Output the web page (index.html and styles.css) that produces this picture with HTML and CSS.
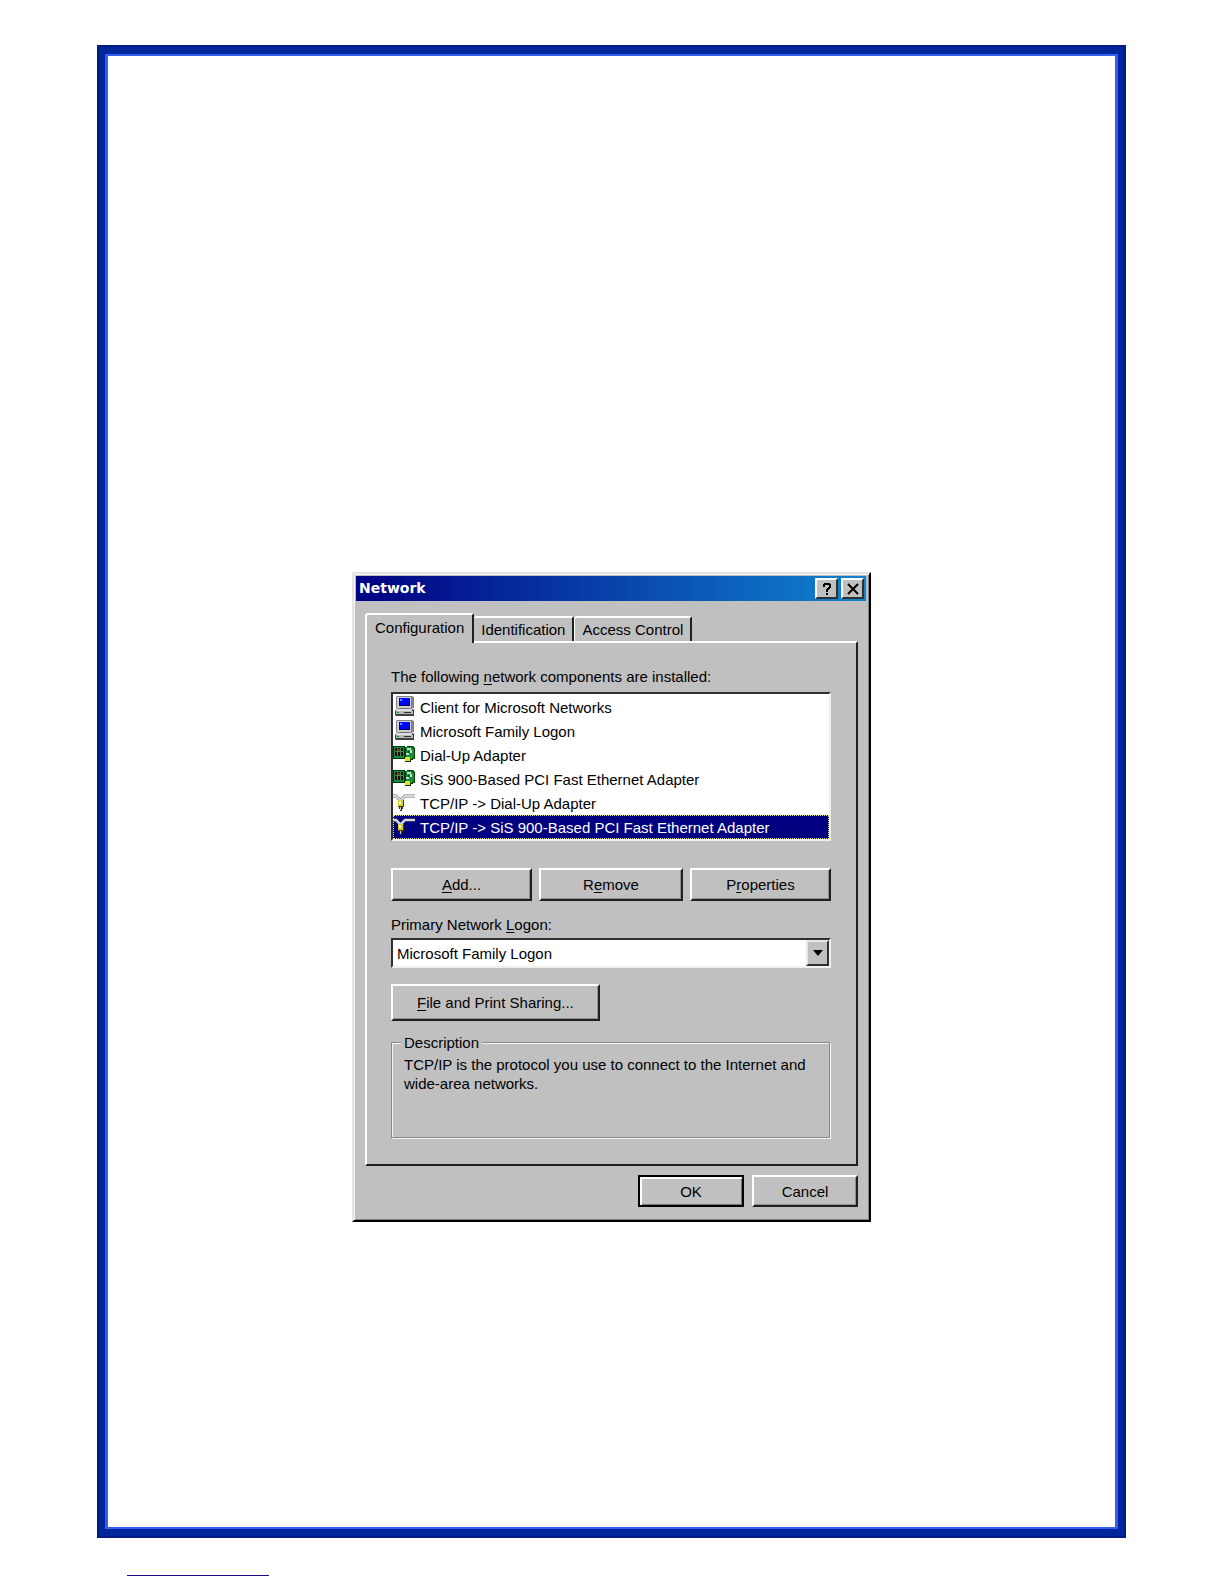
FILE: index.html
```html
<!DOCTYPE html>
<html lang="en">
<head>
  <meta charset="UTF-8">
  <meta name="viewport" content="width=device-width, initial-scale=1.0">
  <title>Network</title>
  <link rel="stylesheet" href="styles.css">
</head>
<body>
  <!-- shared list icons -->
  <svg class="sprites" aria-hidden="true">
    <symbol id="icon-client" viewBox="0 0 22 22">
      <path fill="#808080" d="M4 0h15l2 1v11h-2v1H5l-2-1V1z"/>
      <path fill="#d0d0d0" d="M4 1h14v11H4z"/>
      <path fill="#000060" d="M6 2h11v8H6z"/>
      <path fill="#0000ff" d="M7 2h9v7H7z"/>
      <path fill="#40a0ff" d="M7 3h2v2H7z"/>
      <path fill="#707070" d="M7 12h9v1H7z"/>
      <path fill="#404040" d="M4 13h16l1 1v6H3l-1-1v-4z"/>
      <path fill="#e0e0e0" d="M4 13h15v2H3z"/>
      <path fill="#b8b8b8" d="M3 15h17v3H3z"/>
      <path fill="#303030" d="M11 16h7v1h-7z"/>
      <path fill="#00a000" d="M4 16h2v1H4z"/>
    </symbol>
    <symbol id="icon-adapter" viewBox="0 0 22 22">
      <path fill="#003800" d="M0 2h12v1h2V2h6l2 2v11h-2v1h-2v2h-6v-3H0z"/>
      <path fill="#149038" d="M1 3h10v11H1zM13 3h6l2 2v9h-2v1h-6z"/>
      <path fill="#101010" d="M2 4h8v8H2z"/>
      <path fill="#3c8c4c" d="M4 4h1v8H4zM7 4h1v8H7zM2 7h8v1H2z"/>
      <path fill="#a02020" d="M5 5h2v2H5z"/>
      <path fill="#b8e0c0" d="M14 4h4v2h-4zM17 6h2v3h-2zM13 9h3v2h-3z"/>
      <path fill="#004010" d="M11 4h1v8h-1zM15 7h1v2h-1z"/>
      <path fill="#e8e020" d="M12 13h5v4h-5z"/>
    </symbol>
    <symbol id="icon-protocol" viewBox="0 0 22 22">
      <path fill="none" stroke="#707070" stroke-width="3" d="M0 4h3l4 4v3M22 4H12L8 8v3"/>
      <path fill="none" stroke="#d8d8d8" stroke-width="2" d="M0 4h3l4 4v3M22 4H12L8 8v2"/>
      <path fill="#404000" d="M5 8h6v7H5z"/>
      <path fill="#d8d020" d="M5 8h5v6H5z"/>
      <path fill="#fffff0" d="M6 9h2v3H6z"/>
      <path fill="#303030" d="M6 15h4v2H6zM7 17h2v2H7z"/>
      <path fill="#c8c8a0" d="M7 15h1v3H7z"/>
    </symbol>
  </svg>

  <main class="page-frame">
    <section class="dialog" role="dialog" aria-labelledby="dialog-title">
      <header class="title-bar">
        <h1 class="title" id="dialog-title">Network</h1>
        <button type="button" class="title-button" aria-label="Help">
          <svg width="12" height="14" viewBox="0 0 12 14"><path d="M2 2h1V1h6v1h1v4H9v1H8v1H7v2H5V7h1V6h1V5h1V3H4v2H2zM5 11h2v2H5z"/></svg>
        </button>
        <button type="button" class="title-button" aria-label="Close">
          <svg width="12" height="14" viewBox="0 0 12 14"><path fill="none" stroke="#000" stroke-width="2" d="M1 2l10 10M11 2L1 12"/></svg>
        </button>
      </header>

      <div class="dialog-body">
        <div class="tabs" role="tablist">
          <button type="button" class="tab active" role="tab" aria-selected="true">Configuration</button>
          <button type="button" class="tab" role="tab" aria-selected="false">Identification</button>
          <button type="button" class="tab" role="tab" aria-selected="false">Access Control</button>
        </div>

        <div class="panel" role="tabpanel">
          <p class="label" id="components-label">The following <u>n</u>etwork components are installed:</p>
          <ul class="component-list" role="listbox" aria-labelledby="components-label" tabindex="0">
            <li role="option"><svg class="icon"><use href="#icon-client"/></svg>Client for Microsoft Networks</li>
            <li role="option"><svg class="icon"><use href="#icon-client"/></svg>Microsoft Family Logon</li>
            <li role="option"><svg class="icon"><use href="#icon-adapter"/></svg>Dial-Up Adapter</li>
            <li role="option"><svg class="icon"><use href="#icon-adapter"/></svg>SiS 900-Based PCI Fast Ethernet Adapter</li>
            <li role="option"><svg class="icon"><use href="#icon-protocol"/></svg>TCP/IP -&gt; Dial-Up Adapter</li>
            <li role="option" class="selected" aria-selected="true"><svg class="icon"><use href="#icon-protocol"/></svg>TCP/IP -&gt; SiS 900-Based PCI Fast Ethernet Adapter</li>
          </ul>

          <div class="component-actions">
            <button type="button" class="button"><span><u>A</u>dd...</span></button>
            <button type="button" class="button"><span>R<u>e</u>move</span></button>
            <button type="button" class="button"><span>P<u>r</u>operties</span></button>
          </div>

          <label class="label" for="logon">Primary Network <u>L</u>ogon:</label>
          <div class="combo">
            <select id="logon">
              <option>Microsoft Family Logon</option>
            </select>
            <span class="combo-arrow" aria-hidden="true">
              <svg width="10" height="6" viewBox="0 0 10 6"><path d="M0 0h10L5 6z"/></svg>
            </span>
          </div>

          <button type="button" class="button sharing"><span><u>F</u>ile and Print Sharing...</span></button>

          <fieldset class="description">
            <legend>Description</legend>
            <p>TCP/IP is the protocol you use to connect to the Internet and wide-area networks.</p>
          </fieldset>
        </div>

        <footer class="dialog-actions">
          <button type="button" class="button default">OK</button>
          <button type="button" class="button">Cancel</button>
        </footer>
      </div>
    </section>
  </main>

  <hr class="page-rule">
</body>
</html>
```

FILE: styles.css
```css
* {
  box-sizing: border-box;
}
body {
  margin: 0;
  padding: 45px 98px 0 97px;
  background-color: #fff;
  color: #000;
  font-family: "Liberation Sans", Arial, sans-serif;
  font-size: 15px;
  line-height: 19px;
}
button,
select {
  font: inherit;
  color: inherit;
}
p,
ul,
h1 {
  margin: 0;
  padding: 0;
}
u {
  text-underline-offset: 2px;
}
.sprites {
  position: absolute;
  width: 0;
  height: 0;
}

/* blue page border */
.page-frame {
  min-height: calc(100vh - 91px);
  padding: 518px 20px 40px;
  border: solid #00269c;
  border-width: 9px 8px;
  outline: 2px solid #001c80;
  outline-offset: -2px;
  box-shadow: inset 0 0 0 2px #3460f0, inset 3px 0 #3460f0, inset -3px 0 #3460f0;
}
.page-rule {
  width: 142px;
  height: 1px;
  margin: 37px 0 0 30px;
  border: 0;
  background-color: #1c0c90;
}

/* dialog window */
.dialog {
  max-width: 519px;
  margin: 0 auto;
  padding: 2px 3px 2px 2px;
  border: 2px solid;
  border-color: #e4e4e4 #000 #000 #e4e4e4;
  background-color: #c0c0c0;
  box-shadow: inset 1px 1px #f4f4f4, inset -1px -1px #808080;
}
.title-bar {
  display: flex;
  align-items: center;
  gap: 3px;
  height: 25px;
  padding: 0 2px 0 3px;
  background: linear-gradient(to right, #000082, #1084d0);
}
.title {
  flex: 1;
  color: #fff;
  font-family: "DejaVu Sans", Verdana, sans-serif;
  font-size: 14px;
  font-weight: bold;
}
.title-button {
  display: flex;
  align-items: center;
  justify-content: center;
  width: 23px;
  height: 21px;
  padding: 0;
  border: 2px solid;
  border-color: #fff #303030 #303030 #fff;
  background-color: #c0c0c0;
}
.dialog-body {
  padding: 12px 8px 11px 9px;
}

/* tabs */
.tabs {
  display: flex;
  align-items: flex-end;
}
.tab {
  height: 25px;
  padding: 0 7px;
  border: solid;
  border-width: 2px 2px 0 0;
  border-color: #fff #202020 #fff #fff;
  border-radius: 3px 2px 0 0;
  background-color: #c0c0c0;
}
.tab + .tab + .tab {
  border-left-width: 1px;
}
.tab.active {
  position: relative;
  height: 30px;
  margin-bottom: -2px;
  padding: 0 8px 4px;
  border-left-width: 2px;
}
.panel {
  padding: 24px 25px 25px 24px;
  border: 2px solid;
  border-color: #fff #202020 #202020 #fff;
}
.label {
  display: block;
}

/* installed components */
.component-list {
  margin-top: 6px;
  padding-top: 1px;
  border: 2px solid;
  border-color: #303030 #f0f0f0 #f0f0f0 #303030;
  background-color: #fff;
  list-style: none;
}
.component-list li {
  display: flex;
  align-items: center;
  gap: 5px;
  height: 24px;
  white-space: nowrap;
}
.component-list .selected {
  background-color: #000080;
  color: #fff;
  outline: 1px dotted #e0e080;
  outline-offset: -1px;
}
.icon {
  flex: none;
  width: 22px;
  height: 22px;
}

/* push buttons */
.button {
  height: 33px;
  padding: 0 8px;
  border: 2px solid;
  border-color: #fff #202020 #202020 #fff;
  background-color: #c0c0c0;
  box-shadow: inset -1px -1px #909090;
}
.component-actions {
  display: grid;
  grid-template-columns: 141fr 144fr 141fr;
  gap: 7px;
  margin: 27px 0 14px;
}
.sharing {
  display: block;
  height: 37px;
  margin: 16px 0 12px;
  padding: 0 24px;
}

/* logon drop-down */
.combo {
  display: flex;
  position: relative;
  margin-top: 4px;
  border: 2px solid;
  border-color: #303030 #f0f0f0 #f0f0f0 #303030;
  background-color: #fff;
}
.combo select {
  width: 100%;
  height: 26px;
  padding: 0 26px 0 4px;
  border: 0;
  background-color: transparent;
  appearance: none;
}
.combo-arrow {
  display: flex;
  position: absolute;
  top: 0;
  right: 0;
  bottom: 0;
  align-items: center;
  justify-content: center;
  width: 23px;
  border: 2px solid;
  border-color: #e8e8e8 #303030 #303030 #e8e8e8;
  background-color: #c0c0c0;
  pointer-events: none;
}

/* description group */
.description {
  min-height: 105px;
  margin: 0 1px 1px 0;
  padding: 3px 10px 10px 12px;
  border: 1px solid #888;
  box-shadow: 1px 1px #f4f4f4, inset 1px 1px #f4f4f4;
}
.description legend {
  margin-left: -3px;
  padding: 0 3px;
  background-color: #c0c0c0;
}

.dialog-actions {
  display: flex;
  justify-content: flex-end;
  gap: 8px;
  margin-top: 9px;
}
.dialog-actions .button {
  width: 106px;
  height: 32px;
}
.dialog-actions .default {
  border-color: #000;
  box-shadow: inset 2px 2px #fff, inset -1px -1px #707070;
}
```
